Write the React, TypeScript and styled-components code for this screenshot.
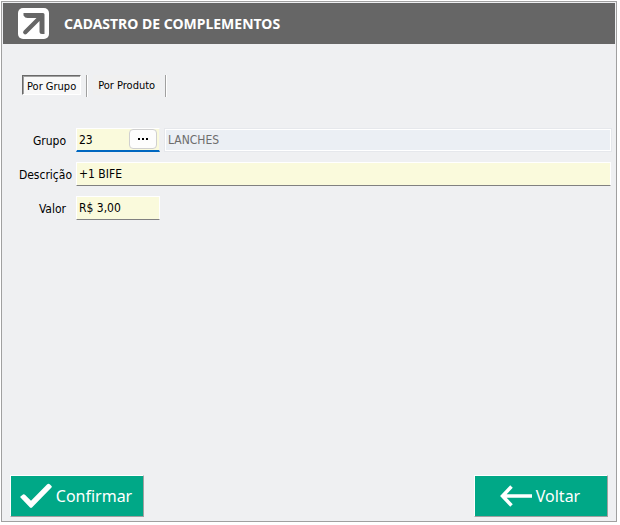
import React, { useState } from "react";
import styled, { createGlobalStyle } from "styled-components";

const uiFont = `"DejaVu Sans Condensed", "Noto Sans", sans-serif`;
const titleFont = `"Noto Sans", "Open Sans", sans-serif`;

const GlobalStyle = createGlobalStyle`
  *, *::before, *::after { box-sizing: border-box; }
  html, body, #root { height: 100%; margin: 0; }
  body { background: #fff; color: #000; font: 12px/16px ${uiFont}; }
  button, input { font: inherit; color: inherit; margin: 0; border-radius: 0; }
`;

const Page = styled.div`
  display: flex;
  min-height: 100%;
  padding: 1px 3px 3px 1px;
`;

const Window = styled.form`
  flex: 1;
  min-width: 0;
  display: flex;
  flex-direction: column;
  padding: 1px;
  border: 1px solid #a0a0a0;
  background: #eff0f2;
`;

const TitleBar = styled.header`
  display: flex;
  align-items: center;
  gap: 15px;
  height: 41px;
  padding-left: 15px;
  background: #666;
  color: #fff;
`;

const Title = styled.h1`
  margin: 0;
  font: 700 14px/20px ${titleFont};
`;

const Tabs = styled.div`
  display: flex;
  align-items: flex-start;
  padding: 31px 0 0 19px;
`;

const Tab = styled.button<{ $active: boolean }>`
  height: 20px;
  padding: ${(p) => (p.$active ? "3px 4px 0" : "1px 4px 0")};
  border: 1px solid;
  border-color: ${(p) => (p.$active ? "#696969 #fff #fff #696969" : "transparent")};
  background: ${(p) => (p.$active ? "#f8f8f8" : "#f0f0f0")};
  box-shadow: ${(p) => (p.$active ? "inset 1px 1px 0 #a0a0a0" : "none")};
  font: 11px/16px ${uiFont};
`;

const TabDivider = styled.span`
  width: 2px;
  height: 22px;
  margin: 0 5px;
  border-left: 1px solid #a0a0a0;
  border-right: 1px solid #fff;
`;

const Fields = styled.div`
  flex: 1;
  display: flex;
  flex-direction: column;
  gap: 10px;
  padding: 31px 4px 0 9px;
`;

const Row = styled.div`
  display: flex;
  align-items: center;
  gap: 4px;
`;

const Label = styled.label<{ $inset?: boolean }>`
  width: 60px;
  padding: 2px ${(p) => (p.$inset ? "6px" : "0")} 0 0;
  text-align: right;
`;

const TextInput = styled.input<{ $fill?: boolean }>`
  ${(p) => (p.$fill ? "flex: 1; min-width: 0;" : "width: 84px;")}
  height: 24px;
  padding: 0 2px;
  border: 1px solid #fff;
  border-bottom-color: #808080;
  outline: 0;
  background: #fafadc;

  &:read-only {
    margin-left: 1px;
    border-color: #fff;
    outline: 1px solid #e6e8ec;
    outline-offset: 0;
    height: 22px;
    background: #ebeff4;
    color: #6d6d6d;
  }
`;

const Lookup = styled.div`
  display: flex;
  width: 84px;
  height: 24px;
  padding-right: 2px;
  border: 1px solid #fff;
  border-right-color: #f0f0f0;
  border-bottom: 2px solid #0067c0;
  background: #fafadc;
`;

const LookupInput = styled.input`
  flex: 1;
  min-width: 0;
  padding: 0 2px;
  border: 0;
  outline: 0;
  background: transparent;
`;

const LookupButton = styled.button`
  display: flex;
  align-items: center;
  justify-content: center;
  width: 28px;
  height: 20px;
  padding: 0;
  border: 1px solid #d0d0d0;
  border-radius: 4px;
  background: #fdfdfd;
`;

const Footer = styled.footer`
  display: flex;
  justify-content: space-between;
  padding: 0 7px 3px;
`;

const ActionButton = styled.button`
  display: flex;
  align-items: center;
  justify-content: center;
  gap: 4px;
  width: 134px;
  height: 42px;
  padding: 0 2px 0 0;
  border: 1px solid;
  border-color: #fff #a0a0a0 #a0a0a0 #fff;
  background: #00a887;
  color: #fff;
  font: 16px/24px ${titleFont};
`;

const Logo = () => (
  <svg width="31" height="31" viewBox="0 0 31 31" aria-hidden="true">
    <rect width="31" height="31" rx="5" fill="#fff" />
    <path
      d="M5.5 5H25q1.5 0 1.5 1.5V26H24q-2.500 0-2.500-2.500V13L8.500 26q-1.500 1-2.800-.3-1.400-1.500 0-2.900L18.500 10H9.500q-2.500 0-4-2.500z"
      fill="#666"
    />
  </svg>
);

const DotsIcon = () => (
  <svg width="12" height="4" viewBox="0 0 12 4" aria-hidden="true">
    <path d="M1 1h2v2H1zM5 1h2v2H5zM9 1h2v2H9z" fill="#000" />
  </svg>
);

const CheckIcon = () => (
  <svg width="32" height="26" viewBox="0 0 32 26" aria-hidden="true">
    <path
      d="M.5 13.500L3 11.500q1-.7 2 .3l6 6L27 1.500q1.500-1.300 3 0l1.500 1.500q.7.800 0 1.500L12 24.500q-1 .8-2 0L.5 14.500q-.5-.5 0-1z"
      fill="#fff"
    />
  </svg>
);

const ArrowIcon = () => (
  <svg width="32" height="22" viewBox="0 0 32 22" aria-hidden="true">
    <path d="M11.500 1.500L2.500 11l9 9.500M2.500 11H32" fill="none" stroke="#fff" strokeWidth="3.500" />
  </svg>
);

export default function App() {
  const [tab, setTab] = useState("grupo");
  return (
    <>
      <GlobalStyle />
      <Page>
        <Window onSubmit={(e) => e.preventDefault()}>
          <TitleBar>
            <Logo />
            <Title>CADASTRO DE COMPLEMENTOS</Title>
          </TitleBar>
          <Tabs role="tablist">
            <Tab type="button" role="tab" aria-selected={tab === "grupo"} $active={tab === "grupo"} onClick={() => setTab("grupo")}>
              Por Grupo
            </Tab>
            <TabDivider />
            <Tab type="button" role="tab" aria-selected={tab === "produto"} $active={tab === "produto"} onClick={() => setTab("produto")}>
              Por Produto
            </Tab>
            <TabDivider />
          </Tabs>
          <Fields>
            <Row>
              <Label htmlFor="grupo" $inset>Grupo</Label>
              <Lookup>
                <LookupInput id="grupo" defaultValue="23" />
                <LookupButton type="button" aria-label="Buscar grupo"><DotsIcon /></LookupButton>
              </Lookup>
              <TextInput $fill readOnly aria-label="Nome do grupo" value="LANCHES" />
            </Row>
            <Row>
              <Label htmlFor="descricao">Descrição</Label>
              <TextInput id="descricao" $fill defaultValue="+1 BIFE" />
            </Row>
            <Row>
              <Label htmlFor="valor" $inset>Valor</Label>
              <TextInput id="valor" defaultValue="R$ 3,00" />
            </Row>
          </Fields>
          <Footer>
            <ActionButton type="submit"><CheckIcon />Confirmar</ActionButton>
            <ActionButton type="button"><ArrowIcon />Voltar</ActionButton>
          </Footer>
        </Window>
      </Page>
    </>
  );
}
